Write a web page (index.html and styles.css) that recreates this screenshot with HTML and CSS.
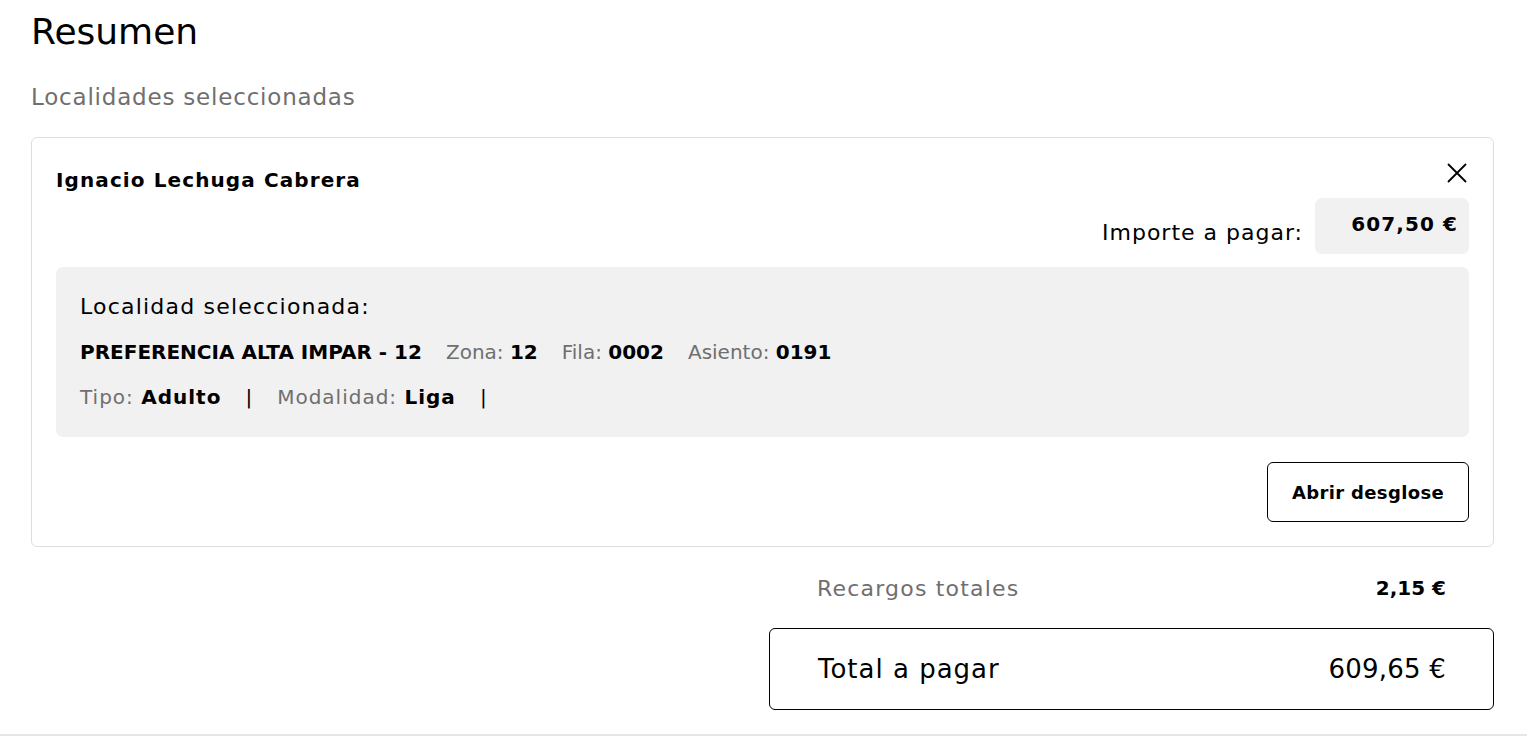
FILE: index.html
```
<!DOCTYPE html>
<html lang="es">
<head>
<meta charset="utf-8">
<title>Resumen</title>
<link rel="stylesheet" href="styles.css">
</head>
<body>
<main class="page">
  <h1 class="title">Resumen</h1>
  <p class="subtitle">Localidades seleccionadas</p>

  <section class="card">
    <div class="card-head">
      <h2 class="holder">Ignacio Lechuga Cabrera</h2>
      <button class="close" aria-label="Cerrar">
        <svg width="20" height="20" viewBox="0 0 20 20"><path d="M1.5 1.5 L18.5 18.5 M18.5 1.5 L1.5 18.5" stroke="#000" stroke-width="1.8" fill="none" stroke-linecap="round"/></svg>
      </button>
    </div>
    <div class="amount-row">
      <span class="amount-label">Importe a pagar:</span>
      <span class="amount-box">607,50 €</span>
    </div>
    <div class="seat">
      <p class="seat-line seat-title">Localidad seleccionada:</p>
      <p class="seat-line seat-items">
        <b>PREFERENCIA ALTA IMPAR - 12</b>
        <span class="muted">Zona: <b>12</b></span>
        <span class="muted">Fila: <b>0002</b></span>
        <span class="muted">Asiento: <b>0191</b></span>
      </p>
      <p class="seat-line seat-items seat-meta">
        <span class="muted">Tipo: <b>Adulto</b></span>
        <span class="sep">|</span>
        <span class="muted">Modalidad: <b>Liga</b></span>
        <span class="sep">|</span>
      </p>
    </div>
    <div class="actions">
      <button class="btn">Abrir desglose</button>
    </div>
  </section>

  <section class="totals">
    <div class="surcharge">
      <span class="muted surcharge-label">Recargos totales</span>
      <b>2,15 €</b>
    </div>
    <div class="grand">
      <span class="grand-label">Total a pagar</span>
      <span class="grand-value">609,65 €</span>
    </div>
  </section>
</main>
</body>
</html>
```

FILE: styles.css
```
* { box-sizing: border-box; }
html, body { margin: 0; padding: 0; background: #fff; }
body {
  font-family: "DejaVu Sans", "Open Sans", sans-serif;
  color: #000;
  height: 736px;
  overflow: hidden;
}
.page {
  padding: 0 33px 0 31px;
  height: 736px;
  border-bottom: 2px solid #e6e6e6;
}
.title {
  margin: 0;
  padding-top: 8px;
  font-size: 36px;
  font-weight: 400;
  line-height: 48px;
  height: 81px;
}
.subtitle {
  margin: 0;
  font-size: 23px;
  letter-spacing: 0.8px;
  line-height: 32px;
  color: #6f6f6f;
  height: 56px;
}
.card {
  border: 1px solid #dedede;
  border-radius: 6px;
  padding: 24px;
}
.card-head {
  display: flex;
  justify-content: space-between;
  align-items: flex-start;
  height: 36px;
}
.holder {
  margin: 0;
  font-size: 20px;
  font-weight: 700;
  letter-spacing: 1.1px;
  line-height: 36px;
}
.close {
  border: 0;
  background: none;
  padding: 0;
  margin: 1px 2px 0 0;
  width: 20px;
  height: 20px;
  display: flex;
}
.amount-row {
  display: flex;
  justify-content: flex-end;
  align-items: center;
  gap: 12px;
  height: 56px;
  margin-bottom: 13px;
}
.amount-label { font-size: 22px; letter-spacing: 1px; padding-top: 12px; }
.amount-box {
  width: 154px;
  height: 56px;
  background: #f1f1f1;
  border-radius: 7px;
  font-weight: 700;
  font-size: 20px;
  letter-spacing: 1.1px;
  display: flex;
  align-items: center;
  justify-content: flex-end;
  padding: 0 11px 4px;
}
.seat {
  background: #f1f1f1;
  border-radius: 7px;
  padding: 24px;
}
.seat-line {
  margin: 0;
  font-size: 20px;
  line-height: 32px;
}
.seat-title { font-size: 22px; letter-spacing: 1.2px; }
.seat-line + .seat-line { margin-top: 13px; }
.seat-items { display: flex; gap: 24px; }
.seat-items b { font-weight: 700; color: #000; }
.seat-meta { letter-spacing: 1px; gap: 24px; }
.muted { color: #6f6f6f; }
.sep { color: #000; }
.actions {
  display: flex;
  justify-content: flex-end;
  margin-top: 25px;
}
.btn {
  font-family: inherit;
  font-size: 18px;
  font-weight: 700;
  letter-spacing: 0.35px;
  color: #000;
  background: #fff;
  border: 1px solid #000;
  border-radius: 6px;
  width: 202px;
  height: 60px;
}
.totals {
  width: 725px;
  margin-left: auto;
  padding-top: 24px;
}
.surcharge {
  display: flex;
  justify-content: space-between;
  align-items: center;
  padding: 0 48px;
  height: 34px;
  font-size: 21px;
}
.surcharge-label { font-size: 22px; letter-spacing: 1.2px; }
.surcharge b { font-weight: 700; font-size: 20px; }
.grand {
  margin-top: 23px;
  height: 82px;
  border: 1px solid #000;
  border-radius: 6px;
  display: flex;
  justify-content: space-between;
  align-items: center;
  padding: 0 48px;
  font-size: 26px;
}
.grand-label { letter-spacing: 1px; }
.grand-value { letter-spacing: 0.2px; margin-right: -1px; }
```
